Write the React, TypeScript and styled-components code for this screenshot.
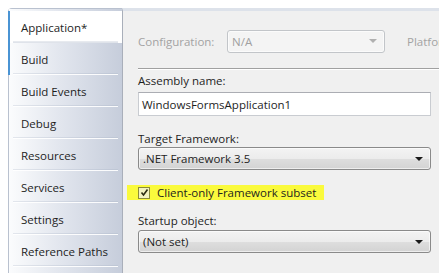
import React from 'react';
import styled, { createGlobalStyle } from 'styled-components';

const GlobalStyle = createGlobalStyle`
  html, body {
    margin: 0;
    padding: 0;
    background: #ffffff;
  }
  body {
    font-family: "Open Sans", "Noto Sans", sans-serif;
    font-size: 11.5px;
    color: #1e1e1e;
  }
`;

const Page = styled.div`
  width: 439px;
  height: 273px;
  overflow: hidden;
  padding: 8px 0 0 8px;
  box-sizing: border-box;
  background: #ffffff;
`;

const Designer = styled.div`
  display: flex;
  height: 300px;
  border-top: 1px solid #b9c1cf;
  border-left: 1px solid #b9c1cf;
  border-top-left-radius: 4px;
`;

const TabStrip = styled.div`
  width: 113px;
  flex-shrink: 0;
  display: flex;
  flex-direction: column;
  padding-top: 2px;
  background: linear-gradient(to right, #fbfcfd 0%, #e2e6ee 45%, #c6cddb 100%);
`;

const Tab = styled.div<{ $active?: boolean; $marked?: boolean }>`
  height: 32px;
  flex-shrink: 0;
  display: flex;
  align-items: center;
  padding-left: 11px;
  box-sizing: border-box;
  position: relative;
  white-space: nowrap;
  background: ${(p) => (p.$active ? '#ffffff' : 'transparent')};
  border-left: 2px solid ${(p) => (p.$marked ? '#4a94d4' : 'transparent')};
  margin-left: -1px;
  &::after {
    content: '';
    position: absolute;
    left: 3px;
    right: 4px;
    bottom: 0;
    height: 1px;
    background: ${(p) => (p.$active ? '#dfe3ea' : 'rgba(255, 255, 255, 0.9)')};
    box-shadow: 0 -1px 0 rgba(160, 170, 190, 0.25);
  }
`;

const Panel = styled.div`
  flex: 1;
  min-width: 0;
  overflow: hidden;
  background: #f0f0f0;
  border-left: 1px solid #a9afba;
  border-top: 3px solid #dde2ea;
  margin-top: -1px;
  padding: 19px 0 0 15px;
  display: flex;
  flex-direction: column;
`;

const ConfigRow = styled.div`
  display: flex;
  align-items: center;
  height: 22px;
  white-space: nowrap;
`;

const DimLabel = styled.span<{ $width?: number; $gap?: number }>`
  color: #a3a3a3;
  width: ${(p) => (p.$width ? `${p.$width}px` : 'auto')};
  margin-left: ${(p) => p.$gap ?? 0}px;
  flex-shrink: 0;
`;

const Combo = styled.div<{ $disabled?: boolean; $width?: number }>`
  height: 23px;
  box-sizing: border-box;
  width: ${(p) => (p.$width ? `${p.$width}px` : '293px')};
  flex-shrink: 0;
  border: 1px solid ${(p) => (p.$disabled ? '#c2c5c9' : '#8a8a8a')};
  border-radius: 3px;
  display: flex;
  align-items: center;
  padding: 0 7px 0 4px;
  color: ${(p) => (p.$disabled ? '#a0a0a0' : '#1e1e1e')};
  background: ${(p) =>
    p.$disabled
      ? '#f4f4f4'
      : 'linear-gradient(to bottom, #f3f3f3 0%, #ececec 50%, #dedede 51%, #d3d3d3 100%)'};
  box-shadow: inset 0 0 0 1px rgba(255, 255, 255, 0.6);
`;

const ComboText = styled.span`
  flex: 1;
`;

const Arrow = styled.span<{ $disabled?: boolean }>`
  width: 0;
  height: 0;
  border-left: 4px solid transparent;
  border-right: 4px solid transparent;
  border-top: 4px solid ${(p) => (p.$disabled ? '#b0b0b0' : '#1a1a1a')};
`;

const Separator = styled.div`
  height: 1px;
  background: #a0a0a0;
  border-bottom: 1px solid #ffffff;
  margin: 16px 0 3px 0;
`;

const FieldLabel = styled.div<{ $gap?: number }>`
  height: 16px;
  line-height: 16px;
  margin-bottom: ${(p) => p.$gap ?? 0}px;
`;

const TextBox = styled.div`
  width: 293px;
  height: 24px;
  box-sizing: border-box;
  background: #ffffff;
  border: 1px solid #c9ccd1;
  border-top-color: #abadb3;
  display: flex;
  align-items: center;
  padding-left: 3px;
  margin-bottom: 15px;
`;

const Highlight = styled.div`
  align-self: flex-start;
  margin: 15px 0 13px -11px;
  padding: 0 8px 0 11px;
  height: 15px;
  display: flex;
  align-items: center;
  gap: 7px;
  background: #fafa3c;
`;

const CheckBox = styled.span`
  width: 12px;
  height: 12px;
  box-sizing: border-box;
  border: 1px solid #8a8a3a;
  background: #f2f2c0;
  display: flex;
  align-items: center;
  justify-content: center;
`;

const App: React.FC = () => {
  const tabs = [
    'Application*',
    'Build',
    'Build Events',
    'Debug',
    'Resources',
    'Services',
    'Settings',
    'Reference Paths',
    'Signing',
  ];

  return (
    <React.Fragment>
      <GlobalStyle />
      <Page>
        <Designer>
          <TabStrip>
            {tabs.map((t, i) => (
              <Tab key={t} $active={i === 0} $marked={i < 2}>
                {i < 8 ? t : ''}
              </Tab>
            ))}
          </TabStrip>
          <Panel>
            <ConfigRow>
              <DimLabel $width={89}>Configuration:</DimLabel>
              <Combo $disabled $width={158}>
                <ComboText>N/A</ComboText>
                <Arrow $disabled />
              </Combo>
              <DimLabel $gap={22}>Platform:</DimLabel>
            </ConfigRow>
            <Separator />
            <FieldLabel $gap={3}>Assembly name:</FieldLabel>
            <TextBox>WindowsFormsApplication1</TextBox>
            <FieldLabel>Target Framework:</FieldLabel>
            <Combo>
              <ComboText>.NET Framework 3.5</ComboText>
              <Arrow />
            </Combo>
            <Highlight>
              <CheckBox>
                <svg width="9" height="9" viewBox="0 0 9 9">
                  <path d="M1.5 4.5 L3.5 7 L7.5 1.5" fill="none" stroke="#2b2b10" strokeWidth="1.6" />
                </svg>
              </CheckBox>
              <span>Client-only Framework subset</span>
            </Highlight>
            <FieldLabel $gap={1}>Startup object:</FieldLabel>
            <Combo>
              <ComboText>(Not set)</ComboText>
              <Arrow />
            </Combo>
          </Panel>
        </Designer>
      </Page>
    </React.Fragment>
  );
};

export default App;
